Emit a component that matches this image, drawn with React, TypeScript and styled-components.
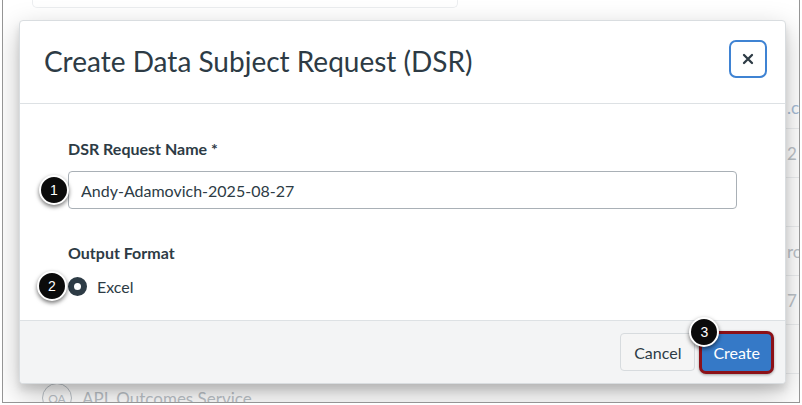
import React from "react";
import styled, { createGlobalStyle } from "styled-components";

const GlobalStyle = createGlobalStyle`
  html, body {
    margin: 0;
    padding: 0;
    background: #ffffff;
  }
  body {
    font-family: Lato, "Open Sans", "Liberation Sans", sans-serif;
    color: #2d3b45;
  }
  * {
    box-sizing: border-box;
  }
`;

const colors = {
  ink: "#2d3b45",
  line: "#dde1e4",
  inputBorder: "#a9b0b6",
  footer: "#f3f4f5",
  brand: "#3579c7",
  focus: "#3f83d3",
  highlight: "#8c1118",
  faded: "#bcc3c9",
  fadedLink: "#a6bcd6",
  fadedLine: "#eceef0"
};

const Root = styled.div`
  width: 802px;
  height: 405px;
  padding: 0 3px 2px 2px;
`;

const Frame = styled.div`
  position: relative;
  width: 798px;
  height: 403px;
  border: 1px solid #959595;
  border-top: none;
  background: #ffffff;
  overflow: hidden;
`;

/* background page, faded behind the dialog */

const SearchStub = styled.div`
  width: 426px;
  height: 8px;
  margin-left: 29px;
  border: 1px solid ${colors.fadedLine};
  border-top: none;
  border-radius: 0 0 5px 5px;
`;

const Table = styled.div`
  margin: 72px 0 0 29px;
`;

const Row = styled.div<{ $head?: boolean }>`
  display: grid;
  grid-template-columns: 745px auto;
  align-items: ${p => (p.$head ? "end" : "center")};
  height: 49px;
  padding-left: 10px;
  padding-bottom: ${p => (p.$head ? "10px" : "0")};
  border-bottom: 1px solid ${colors.fadedLine};
  white-space: nowrap;
`;

const NameCell = styled.div`
  display: flex;
  align-items: center;
  gap: 10px;
  font-size: 17px;
  color: ${colors.faded};
`;

const Avatar = styled.span`
  display: inline-flex;
  align-items: center;
  justify-content: center;
  width: 30px;
  height: 30px;
  border-radius: 50%;
  border: 1px solid ${colors.faded};
  font-size: 12px;
`;

const EdgeCell = styled.div<{ $link?: boolean }>`
  font-size: 17px;
  color: ${p => (p.$link ? colors.fadedLink : colors.faded)};
`;

/* dialog */

const Modal = styled.div`
  position: absolute;
  left: 16px;
  top: 20px;
  width: 767px;
  height: 364px;
  display: flex;
  flex-direction: column;
  background: #ffffff;
  border-radius: 4px;
  border: 1px solid #d9dde0;
  box-shadow: 0 6px 7px rgba(0, 0, 0, 0.1), 0 10px 28px rgba(0, 0, 0, 0.25);
`;

const Header = styled.div`
  display: flex;
  align-items: center;
  justify-content: space-between;
  height: 83px;
  padding: 0 18px 0 24px;
  border-bottom: 1px solid ${colors.line};
`;

const Title = styled.h2`
  margin: 0;
  font-size: 28px;
  font-weight: 400;
  line-height: 1.2;
  color: ${colors.ink};
`;

const CloseButton = styled.button`
  display: flex;
  align-items: center;
  justify-content: center;
  width: 38px;
  height: 38px;
  margin-top: -6px;
  padding: 0;
  border: 2px solid ${colors.focus};
  border-radius: 7px;
  background: #ffffff;
  color: ${colors.ink};
`;

const Body = styled.div`
  flex: 1;
  padding: 33px 48px 0 48px;
`;

const Field = styled.div`
  display: flex;
  flex-direction: column;
`;

const Label = styled.div`
  font-size: 16px;
  font-weight: 700;
  line-height: 24px;
  color: ${colors.ink};
`;

const InputWrap = styled.div`
  position: relative;
  margin-top: 10px;
`;

const TextInput = styled.input`
  display: block;
  width: 100%;
  height: 38px;
  padding: 0 12px;
  border: 1px solid ${colors.inputBorder};
  border-radius: 4px;
  font-family: inherit;
  font-size: 16px;
  color: ${colors.ink};
  background: #ffffff;
`;

const FormatField = styled(Field)`
  margin-top: 32px;
`;

const RadioRow = styled.label`
  position: relative;
  display: flex;
  align-items: center;
  gap: 10px;
  height: 24px;
  margin-top: 9px;
  font-size: 16px;
  color: ${colors.ink};
`;

const RadioDot = styled.span`
  width: 19px;
  height: 19px;
  border-radius: 50%;
  border: 6px solid ${colors.ink};
  background: #ffffff;
`;

const Footer = styled.div`
  display: flex;
  align-items: center;
  justify-content: flex-end;
  gap: 4px;
  height: 63px;
  padding: 0 11px 0 0;
  background: ${colors.footer};
  border-top: 1px solid ${colors.line};
  border-radius: 0 0 4px 4px;
`;

const Button = styled.button<{ $primary?: boolean }>`
  position: relative;
  height: ${p => (p.$primary ? "43px" : "38px")};
  padding: 0 ${p => (p.$primary ? "11px" : "13px")};
  border-radius: ${p => (p.$primary ? "7px" : "4px")};
  border: ${p =>
    p.$primary ? `3px solid ${colors.highlight}` : "1px solid #d7dbde"};
  background: ${p => (p.$primary ? colors.brand : "#f5f5f5")};
  color: ${p => (p.$primary ? "#ffffff" : colors.ink)};
  font-family: inherit;
  font-size: 16px;
  box-shadow: ${p => (p.$primary ? "0 1px 3px rgba(0,0,0,0.35)" : "none")};
`;

const Callout = styled.span<{ $left: number; $top: number }>`
  position: absolute;
  left: ${p => p.$left}px;
  top: ${p => p.$top}px;
  display: flex;
  align-items: center;
  justify-content: center;
  width: 30px;
  height: 30px;
  border-radius: 50%;
  border: 2px solid #ffffff;
  background: #0b0b0b;
  color: #ffffff;
  font-family: "Liberation Sans", Arial, sans-serif;
  font-size: 14px;
  box-shadow: 0 2px 4px rgba(0, 0, 0, 0.55);
  z-index: 2;
`;

const CloseIcon = () => (
  <svg width="12" height="12" viewBox="0 0 12 12" aria-hidden="true">
    <path
      d="M2 2 L10 10 M10 2 L2 10"
      stroke="currentColor"
      strokeWidth="2.3"
      strokeLinecap="round"
    />
  </svg>
);

const rows = [
  { edge: ".co", link: true, head: true },
  { edge: "2" },
  { edge: "" },
  { edge: "ro" },
  { edge: "7" },
  { edge: "" }
];

export default function App() {
  return (
    <Root>
      <GlobalStyle />
      <Frame>
        <SearchStub />
        <Table>
          {rows.map((row, i) => (
            <Row key={i} $head={row.head}>
              <NameCell />
              <EdgeCell $link={row.link}>{row.edge}</EdgeCell>
            </Row>
          ))}
          <Row>
            <NameCell>
              <Avatar>OA</Avatar>
              APL Outcomes Service
            </NameCell>
            <EdgeCell />
          </Row>
        </Table>

        <Modal>
          <Header>
            <Title>Create Data Subject Request (DSR)</Title>
            <CloseButton aria-label="Close">
              <CloseIcon />
            </CloseButton>
          </Header>
          <Body>
            <Field>
              <Label>DSR Request Name *</Label>
              <InputWrap>
                <Callout $left={-29} $top={4}>1</Callout>
                <TextInput defaultValue="Andy-Adamovich-2025-08-27" />
              </InputWrap>
            </Field>
            <FormatField>
              <Label>Output Format</Label>
              <RadioRow>
                <Callout $left={-31} $top={-3}>2</Callout>
                <RadioDot />
                Excel
              </RadioRow>
            </FormatField>
          </Body>
          <Footer>
            <Button>Cancel</Button>
            <Button $primary>
              <Callout $left={-13} $top={-17}>3</Callout>
              Create
            </Button>
          </Footer>
        </Modal>
      </Frame>
    </Root>
  );
}
